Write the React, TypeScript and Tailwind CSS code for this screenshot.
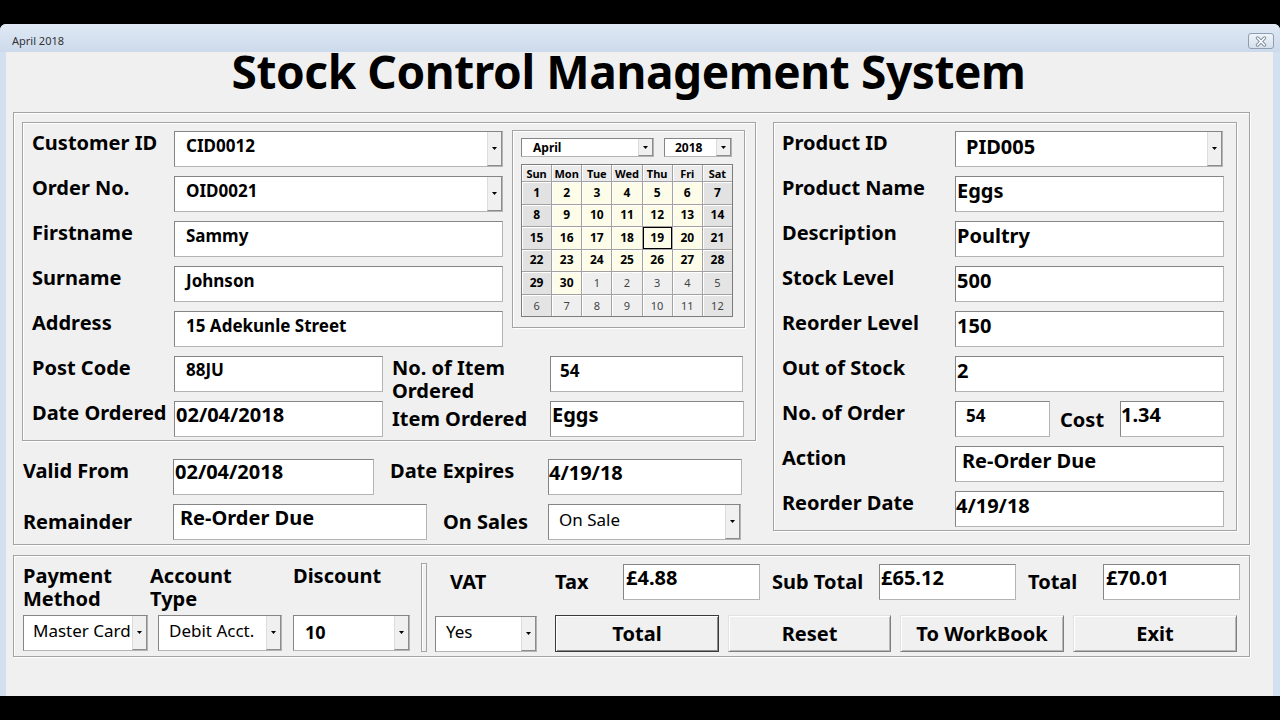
import React from 'react';

// Small black triangle used on every drop-down button
const Arrow = () => (
  <svg width="5" height="3" viewBox="0 0 5 3">
    <polygon points="0,0 5,0 2.5,3" fill="#000" />
  </svg>
);

const DropBtn = () => (
  <div className="flex w-[15px] shrink-0 items-center justify-center self-stretch border-l border-b border-r border-l-[#dcdcdc] border-b-[#8c8c8c] border-r-[#8c8c8c] bg-[#f0f0f0]">
    <Arrow />
  </div>
);

const BOX =
  'bg-white border border-[#b4b4b4] border-t-[#858585] border-l-[#858585]';

function Field({
  value,
  cls,
  text = 'text-[17px] pl-[11px]',
  shift = 'pb-[7px]',
}: {
  value: string;
  cls: string;
  text?: string;
  shift?: string;
}) {
  return (
    <div
      className={`flex h-[36px] shrink-0 items-center whitespace-nowrap font-bold leading-none ${BOX} ${shift} ${cls}`}
    >
      <span className={text}>{value}</span>
    </div>
  );
}

function Combo({
  value,
  cls,
  text = 'text-[17px] pl-[11px]',
  bold = true,
  shift = 'pb-[7px]',
}: {
  value: string;
  cls: string;
  text?: string;
  bold?: boolean;
  shift?: string;
}) {
  return (
    <div className={`flex h-[36px] shrink-0 ${BOX} ${cls}`}>
      <div
        className={`flex flex-1 items-center whitespace-nowrap leading-none ${bold ? 'font-bold' : 'font-normal'} ${shift} ${text}`}
      >
        {value}
      </div>
      <DropBtn />
    </div>
  );
}

function Label({ children, cls = '' }: { children: React.ReactNode; cls?: string }) {
  return (
    <div className={`shrink-0 whitespace-nowrap text-[20px] font-bold leading-[24px] ${cls}`}>
      {children}
    </div>
  );
}

// Two stacked caption lines, 23px apart
function Label2({ a, b, cls = '' }: { a: string; b?: string; cls?: string }) {
  return (
    <div className={`shrink-0 whitespace-nowrap text-[20px] font-bold ${cls}`}>
      <div className="h-[23px] leading-[23px]">{a}</div>
      {b ? <div className="h-[23px] leading-[23px]">{b}</div> : null}
    </div>
  );
}

function Button({ children, cls = '', primary = false }: { children: React.ReactNode; cls?: string; primary?: boolean }) {
  return (
    <div
      className={`flex h-[37px] shrink-0 items-center justify-center bg-[#f0f0f0] text-[20px] font-bold leading-none ${
        primary
          ? 'border border-[#3a3a3a] shadow-[inset_1px_1px_0_#ffffff,inset_-1px_-1px_0_#8a8a8a]'
          : 'border border-t-[#e2e2e2] border-l-[#e2e2e2] border-r-[#7f7f7f] border-b-[#7f7f7f] shadow-[inset_1px_1px_0_#ffffff,inset_-1px_-1px_0_#b8b8b8]'
      } ${cls}`}
    >
      {children}
    </div>
  );
}

const FRAME = 'border border-[#a3a3a3] shadow-[inset_1px_1px_0_#ffffff,1px_1px_0_#ffffff]';

// ---- month calendar ----
type Day = { n: number; cur: boolean; wk: boolean };

function buildDays(): Day[] {
  const out: Day[] = [];
  for (let i = 0; i < 42; i++) {
    const col = i % 7;
    const wk = col === 0 || col === 6;
    if (i < 30) out.push({ n: i + 1, cur: true, wk });
    else out.push({ n: i - 29, cur: false, wk });
  }
  return out;
}

function MiniCombo({ value, cls, text }: { value: string; cls: string; text: string }) {
  return (
    <div className={`flex h-[19px] ${BOX} ${cls}`}>
      <div className={`flex flex-1 items-center text-[12px] font-bold leading-none ${text}`}>{value}</div>
      <DropBtn />
    </div>
  );
}

function Calendar() {
  const heads = ['Sun', 'Mon', 'Tue', 'Wed', 'Thu', 'Fri', 'Sat'];
  const days = buildDays();
  return (
    <div className={`-mt-[1px] ml-[9px] h-[198px] w-[233px] shrink-0 pl-[8px] pt-[7px] ${FRAME}`}>
      <div className="flex">
        <MiniCombo value="April" cls="w-[133px]" text="pl-[11px]" />
        <MiniCombo value="2018" cls="ml-[10px] w-[68px]" text="pl-[10px]" />
      </div>
      <div className="mt-[7px] grid h-[153px] w-[212px] grid-cols-7 grid-rows-[16px_repeat(6,1fr)] gap-px border border-[#7c7c7c] bg-[#a2a2a2]">
        {heads.map((h) => (
          <div
            key={h}
            className="flex items-center justify-center bg-[#ebebeb] text-[11px] font-bold leading-none shadow-[inset_1px_1px_0_#ffffff]"
          >
            {h}
          </div>
        ))}
        {days.map((d, i) => {
          const bg = !d.cur
            ? d.wk
              ? 'bg-[#e4e4e4] font-normal text-[11px] text-[#444444]'
              : 'bg-[#efefef] font-normal text-[11px] text-[#444444]'
            : d.wk
            ? 'bg-[#e2e2e2] font-bold text-[12px]'
            : 'bg-[#fcfce8] font-bold text-[12px]';
          const sel = d.cur && d.n === 19;
          return (
            <div
              key={i}
              className={`flex items-center justify-center leading-none ${bg} ${
                sel ? 'shadow-[inset_0_0_0_1px_#000000]' : 'shadow-[inset_1px_1px_0_#ffffff]'
              }`}
            >
              {d.n}
            </div>
          );
        })}
      </div>
    </div>
  );
}

const leftRows = [
  { label: 'Customer ID', value: 'CID0012', combo: true },
  { label: 'Order No.', value: 'OID0021', combo: true },
  { label: 'Firstname', value: 'Sammy', combo: false },
  { label: 'Surname', value: 'Johnson', combo: false },
  { label: 'Address', value: '15 Adekunle Street', combo: false },
];

const BIG = 'text-[20px] pl-[1px]';

export default function App() {
  return (
    <div className="flex h-[720px] w-[1280px] flex-col overflow-hidden bg-black font-['Noto_Sans',sans-serif] text-black">
      <div className="h-[24px] shrink-0" />
      {/* window */}
      <div className="flex h-[672px] shrink-0 flex-col rounded-t-[6px] bg-[#d3e0ef]">
        {/* caption */}
        <div className="flex h-[28px] shrink-0 justify-between rounded-t-[6px] bg-linear-to-b from-[#e0e9f5] to-[#ccdaeb]">
          <div className="pl-[12px] pt-[10px] text-[11px] leading-[14px] text-[#333]">April 2018</div>
          <div className="mr-[6px] mt-[9px] flex h-[16px] w-[26px] items-center justify-center rounded-[3px] border border-[#8f9db2] bg-linear-to-b from-[#f0f4f9] to-[#d6e0ec]">
            <svg width="14" height="11" viewBox="0 0 14 11">
              <path d="M3.5 2 L10.5 9 M10.5 2 L3.5 9" stroke="#7f8c9e" strokeWidth="3.4" strokeLinecap="round" />
              <path d="M3.5 2 L10.5 9 M10.5 2 L3.5 9" stroke="#ffffff" strokeWidth="1.6" strokeLinecap="round" />
            </svg>
          </div>
        </div>

        {/* client area */}
        <div className="ml-[6px] mr-[7px] flex-1 bg-[#f0f0f0]">
          <div className="flex h-[60px] justify-center pr-[22px]">
            <h1 className="text-[46px] font-bold leading-[39px] tracking-[-0.4px]">Stock Control Management System</h1>
          </div>

          {/* customer / order / product frame */}
          <div className={`ml-[7px] flex h-[433px] w-[1237px] pl-[8px] pt-[9px] ${FRAME}`}>
            {/* left column */}
            <div className="w-[734px] shrink-0">
              <div className={`h-[319px] w-[734px] pl-[9px] pt-[8px] ${FRAME}`}>
                <div className="flex">
                  <div className="flex flex-col gap-[9px]">
                    {leftRows.map((r) => (
                      <div key={r.label} className="flex h-[36px]">
                        <Label cls="w-[142px]">{r.label}</Label>
                        {r.combo ? (
                          <Combo value={r.value} cls="w-[329px]" />
                        ) : (
                          <Field value={r.value} cls="w-[329px]" />
                        )}
                      </div>
                    ))}
                  </div>
                  <Calendar />
                </div>
                <div className="mt-[9px] flex flex-col gap-[9px]">
                  <div className="flex h-[36px]">
                    <Label cls="w-[142px]">Post Code</Label>
                    <Field value="88JU" cls="w-[209px]" shift="pb-[10px]" />
                    <Label2 a="No. of Item" b="Ordered" cls="ml-[9px] w-[158px]" />
                    <Field value="54" cls="w-[193px]" text="text-[17px] pl-[9px]" />
                  </div>
                  <div className="flex h-[36px]">
                    <Label cls="w-[142px]">Date Ordered</Label>
                    <Field value="02/04/2018" cls="w-[209px]" text={BIG} shift="pb-[9px]" />
                    <Label cls="ml-[9px] mt-[6px] w-[158px]">Item Ordered</Label>
                    <Field value="Eggs" cls="w-[194px]" text={BIG} shift="pb-[9px]" />
                  </div>
                </div>
              </div>

              <div className="mt-[18px] flex flex-col gap-[9px]">
                <div className="flex h-[36px]">
                  <Label cls="ml-[1px] w-[150px]">Valid From</Label>
                  <Field value="02/04/2018" cls="w-[201px]" text={BIG} shift="pb-[11px]" />
                  <Label cls="ml-[16px] w-[158px]">Date Expires</Label>
                  <Field value="4/19/18" cls="w-[194px]" text="text-[20px] pl-[0px]" shift="pb-[9px]" />
                </div>
                <div className="flex h-[36px]">
                  <Label cls="ml-[1px] mt-[6px] w-[150px]">Remainder</Label>
                  <Field value="Re-Order Due" cls="w-[254px]" text="text-[20px] pl-[6px]" shift="pb-[9px]" />
                  <Label cls="ml-[16px] mt-[6px] w-[105px]">On Sales</Label>
                  <Combo value="On Sale" cls="w-[193px]" bold={false} text="text-[17px] pl-[10px]" shift="pb-[5px]" />
                </div>
              </div>
            </div>

            {/* product frame */}
            <div className={`ml-[17px] flex h-[409px] w-[464px] shrink-0 flex-col gap-[9px] pl-[8px] pt-[8px] ${FRAME}`}>
              <div className="flex h-[36px]">
                <Label cls="w-[173px]">Product ID</Label>
                <Combo value="PID005" cls="w-[268px]" text="text-[20px] pl-[10px]" shift="pb-[4px]" />
              </div>
              <div className="flex h-[36px]">
                <Label cls="w-[173px]">Product Name</Label>
                <Field value="Eggs" cls="w-[269px]" text={BIG} />
              </div>
              <div className="flex h-[36px]">
                <Label cls="w-[173px]">Description</Label>
                <Field value="Poultry" cls="w-[269px]" text={BIG} />
              </div>
              <div className="flex h-[36px]">
                <Label cls="w-[173px]">Stock Level</Label>
                <Field value="500" cls="w-[269px]" text={BIG} />
              </div>
              <div className="flex h-[36px]">
                <Label cls="w-[173px]">Reorder Level</Label>
                <Field value="150" cls="w-[269px]" text={BIG} />
              </div>
              <div className="flex h-[36px]">
                <Label cls="w-[173px]">Out of Stock</Label>
                <Field value="2" cls="w-[269px]" text={BIG} />
              </div>
              <div className="flex h-[36px]">
                <Label cls="w-[173px]">No. of Order</Label>
                <Field value="54" cls="w-[95px]" text="text-[17px] pl-[10px]" />
                <Label cls="ml-[10px] mt-[7px] w-[60px]">Cost</Label>
                <Field value="1.34" cls="w-[104px]" text="text-[20px] pl-[0px]" shift="pb-[9px]" />
              </div>
              <div className="flex h-[36px]">
                <Label cls="w-[173px]">Action</Label>
                <Field value="Re-Order Due" cls="w-[269px]" text="text-[20px] pl-[6px]" />
              </div>
              <div className="flex h-[36px]">
                <Label cls="w-[173px]">Reorder Date</Label>
                <Field value="4/19/18" cls="w-[269px]" text="text-[20px] pl-[0px]" />
              </div>
            </div>
          </div>

          {/* payment / totals frame */}
          <div className={`ml-[7px] mt-[10px] flex h-[102px] w-[1237px] pl-[9px] pt-[8px] ${FRAME}`}>
            <div className="flex shrink-0">
              <div className="w-[125px] shrink-0">
                <Label2 a="Payment" b="Method" cls="h-[46px]" />
                <Combo value="Master Card" cls="mt-[5px] w-[125px]" bold={false} text="text-[17px] pl-[9px]" shift="pb-[5px]" />
              </div>
              <div className="ml-[10px] w-[124px] shrink-0">
                <Label2 a="Account" b="Type" cls="-ml-[8px] h-[46px]" />
                <Combo value="Debit Acct." cls="mt-[5px] w-[124px]" bold={false} text="text-[17px] pl-[10px]" shift="pb-[5px]" />
              </div>
              <div className="ml-[11px] w-[117px] shrink-0">
                <Label2 a="Discount" cls="h-[46px]" />
                <Combo value="10" cls="mt-[5px] w-[117px]" text="text-[18px] pl-[11px]" shift="pb-[3px]" />
              </div>
            </div>

            <div className="-mt-[1px] ml-[11px] h-[89px] w-[6px] shrink-0 border border-[#a3a3a3] shadow-[inset_1px_1px_0_#ffffff]" />

            <div className="ml-[8px] flex flex-col">
              <div className="flex h-[36px] items-center">
                <Label cls="ml-[15px] w-[105px]">VAT</Label>
                <Label cls="w-[68px]">Tax</Label>
                <Field value="£4.88" cls="w-[137px]" text="text-[20px] pl-[2px]" shift="pb-[9px]" />
                <Label cls="ml-[12px] w-[107px]">Sub Total</Label>
                <Field value="£65.12" cls="w-[137px]" text="text-[20px] pl-[1px]" shift="pb-[9px]" />
                <Label cls="ml-[12px] w-[75px]">Total</Label>
                <Field value="£70.01" cls="w-[137px]" text="text-[20px] pl-[2px]" shift="pb-[9px]" />
              </div>
              <div className="mt-[15px] flex h-[37px]">
                <Combo value="Yes" cls="mt-[1px] h-[35px] w-[102px]" bold={false} text="text-[17px] pl-[10px]" shift="pb-[5px]" />
                <Button primary cls="ml-[18px] w-[164px]">Total</Button>
                <Button cls="ml-[9px] w-[163px]">Reset</Button>
                <Button cls="ml-[9px] w-[164px]">To WorkBook</Button>
                <Button cls="ml-[9px] w-[164px]">Exit</Button>
              </div>
            </div>
          </div>
        </div>
      </div>
      <div className="flex-1" />
    </div>
  );
}
